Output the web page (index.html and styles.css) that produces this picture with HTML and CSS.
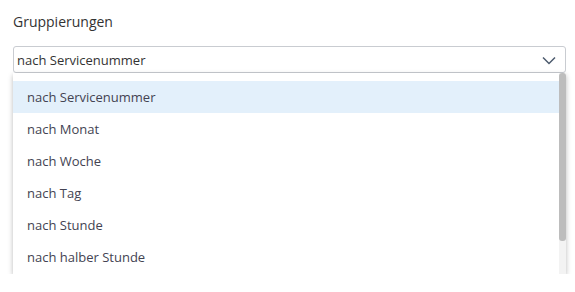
FILE: index.html
```html
<!DOCTYPE html>
<html lang="de">
<head>
<meta charset="utf-8">
<link rel="stylesheet" href="styles.css">
</head>
<body>
<div class="field">
  <div class="label">Gruppierungen</div>
  <div class="select">
    <div class="control">
      <span class="value">nach Servicenummer</span>
      <svg class="chev" width="14" height="9" viewBox="0 0 14 9"><path d="M1 1.5 L7 7.5 L13 1.5" fill="none" stroke="#4d5b6e" stroke-width="1.5"/></svg>
    </div>
    <div class="menu">
      <ul class="list">
        <li class="item active">nach Servicenummer</li>
        <li class="item">nach Monat</li>
        <li class="item">nach Woche</li>
        <li class="item">nach Tag</li>
        <li class="item">nach Stunde</li>
        <li class="item">nach halber Stunde</li>
      </ul>
      <div class="scrollbar"><div class="thumb"></div></div>
    </div>
  </div>
</div>
</body>
</html>
```
FILE: styles.css
```css
html, body { margin: 0; padding: 0; background: #fff; }
body {
  font-family: "Open Sans", "Noto Sans", sans-serif;
  font-size: 14px;
  color: #3b3b44;
}
.field { padding: 12px 9px 0 13px; }
.label { line-height: 20px; margin-bottom: 14px; color: #333; }
.control {
  box-sizing: border-box;
  height: 27px;
  border: 1px solid #c9ccd1;
  border-radius: 3px;
  display: flex;
  align-items: center;
  justify-content: space-between;
  padding: 0 9px 0 3px;
  font-size: 13px;
  color: #333;
}
.chev { display: block; margin-top: 1px; }
.menu {
  display: flex;
  height: 201px;
  background: #fff;
  box-shadow: 0 2px 5px rgba(0,0,0,0.28);
  overflow: hidden;
}
.list {
  flex: 1;
  margin: 0;
  padding: 8px 0 0;
  list-style: none;
}
.scrollbar {
  width: 7px;
  background: #f3f3f3;
  display: flex;
  flex-direction: column;
}
.thumb {
  height: 168px;
  background: #bdbdbd;
  border-radius: 3px;
}
.item {
  height: 32px;
  line-height: 32px;
  padding-left: 14px;
  font-size: 13px;
  color: #434352;
}
.item.active { background: #e3f0fb; }
```
